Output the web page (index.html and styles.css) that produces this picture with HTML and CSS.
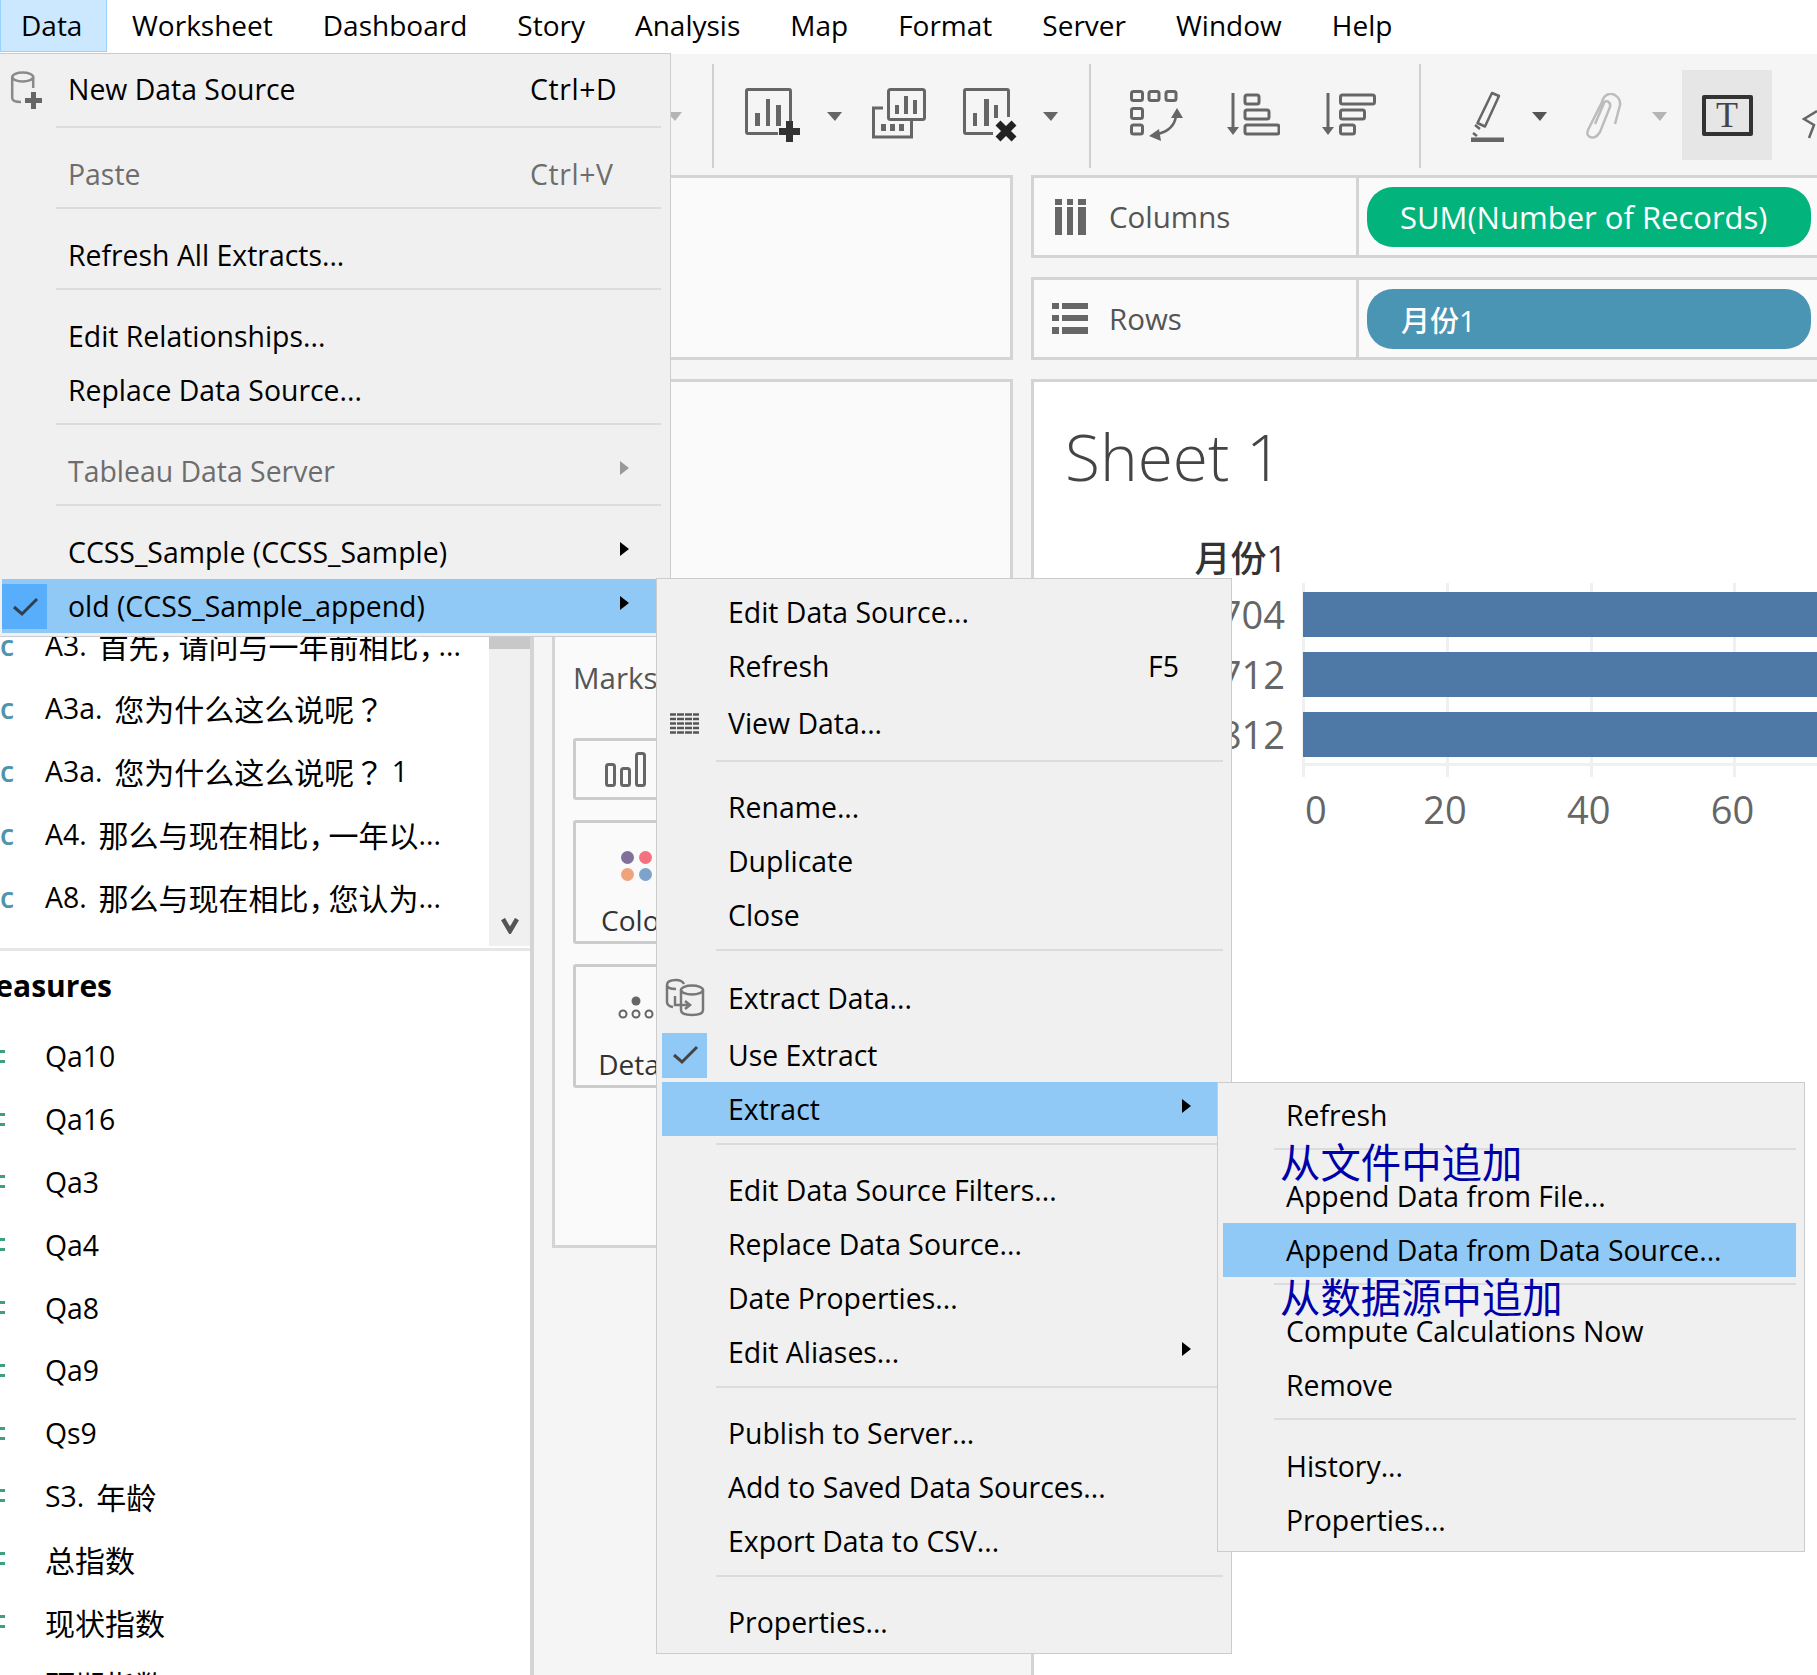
FILE: index.html
```html
<!DOCTYPE html>
<html lang="en">
<head>
    <meta charset="UTF-8">
    <title>Tableau - Data menu</title>
    <link rel="stylesheet" href="styles.css">
</head>
<body>
<div class="app">
    <!-- Menu bar -->
    <nav class="menubar">
        <span class="menubar-item active">Data</span>
        <span class="menubar-item">Worksheet</span>
        <span class="menubar-item">Dashboard</span>
        <span class="menubar-item">Story</span>
        <span class="menubar-item">Analysis</span>
        <span class="menubar-item">Map</span>
        <span class="menubar-item">Format</span>
        <span class="menubar-item">Server</span>
        <span class="menubar-item">Window</span>
        <span class="menubar-item">Help</span>
    </nav>

    <!-- Toolbar -->
    <div class="toolbar">
        <span class="drop faint t-first"></span>
        <span class="tool-sep t-sep1"></span>
        <svg class="t-add" width="56" height="54" viewBox="0 0 56 54" fill="none">
            <path d="M33 45.500H3Q1.500 45.500 1.500 44V3Q1.500 1.500 3 1.500H44Q45.500 1.500 45.500 3V33" stroke="#666" stroke-width="3"/>
            <path d="M10 25h5v13h-5zM21 11h4v27h-4zM31 17h5v21h-5z" fill="#666"/>
            <path d="M34 40h21v7h-21zM41 33h7v21h-7z" fill="#333"/>
        </svg>
        <span class="drop t-drop1"></span>
        <svg class="t-dup" width="54" height="52" viewBox="0 0 54 52" fill="none">
            <rect x="16.500" y="1.500" width="36" height="30" rx="2" stroke="#666" stroke-width="3"/>
            <path d="M23 17h4v9h-4zM32 8h4v18h-4zM41 12h4v14h-4z" fill="#666"/>
            <path d="M11 20H1.500V49H39.500V33" stroke="#666" stroke-width="3"/>
            <path d="M9 36h5v7h-5zM18 36h5v7h-5zM27 36h5v7h-5z" fill="#666"/>
        </svg>
        <svg class="t-clear" width="54" height="54" viewBox="0 0 54 54" fill="none">
            <path d="M30 45.500H3Q1.500 45.500 1.500 44V3Q1.500 1.500 3 1.500H44Q45.500 1.500 45.500 3V29" stroke="#666" stroke-width="3"/>
            <path d="M10 25h4v13h-4zM21 11h5v27h-5zM31 17h4v13h-4z" fill="#666"/>
            <path d="M35 35L51 51M51 35L35 51" stroke="#222" stroke-width="7"/>
        </svg>
        <span class="drop t-drop2"></span>
        <span class="tool-sep t-sep2"></span>
        <svg class="t-swap" width="53" height="52" viewBox="0 0 53 52" fill="none">
            <g stroke="#666" stroke-width="3">
                <rect x="1.500" y="1.500" width="11" height="9" rx="2"/>
                <rect x="19" y="1.500" width="10" height="9" rx="2"/>
                <rect x="36" y="1.500" width="10" height="9" rx="2"/>
                <rect x="1.500" y="18.500" width="11" height="10" rx="2"/>
                <rect x="1.500" y="35" width="11" height="9" rx="2"/>
                <path d="M46 26Q44 40 28 44" stroke-width="2.500"/>
            </g>
            <path d="M47 18L53 28H41zM19 46L29 39L31 51z" fill="#666"/>
        </svg>
        <svg class="t-asc" width="53" height="43" viewBox="0 0 53 43" fill="none">
            <path d="M6 0V35" stroke="#666" stroke-width="3"/>
            <path d="M0 34H12L6 42z" fill="#666"/>
            <g stroke="#666" stroke-width="3">
                <rect x="18" y="2" width="14" height="9" rx="2"/>
                <rect x="18" y="17" width="24" height="9" rx="2"/>
                <rect x="18" y="32" width="34" height="9" rx="2"/>
            </g>
        </svg>
        <svg class="t-desc" width="54" height="43" viewBox="0 0 54 43" fill="none">
            <path d="M6 0V35" stroke="#666" stroke-width="3"/>
            <path d="M0 34H12L6 42z" fill="#666"/>
            <g stroke="#666" stroke-width="3">
                <rect x="18.500" y="2" width="34" height="9" rx="2"/>
                <rect x="18.500" y="17" width="24" height="9" rx="2"/>
                <rect x="18.500" y="32" width="14" height="9" rx="2"/>
            </g>
        </svg>
        <span class="tool-sep t-sep3"></span>
        <svg class="t-pen" width="33" height="52" viewBox="0 0 33 52" fill="none">
            <path d="M21 3L28 6L14 36.500L6.500 33z" stroke="#666" stroke-width="2.500" stroke-linejoin="round"/>
            <path d="M4 35L9 39M2 43L6 46" stroke="#666" stroke-width="2.500"/>
            <path d="M0 47.500h33v4.500h-33z" fill="#666"/>
        </svg>
        <span class="drop dark t-drop3"></span>
        <svg class="t-clip" width="37" height="46" viewBox="0 0 37 46" fill="none">
            <path d="M30 31L35 12C36 4 28 0 24 1C20 2 18 5 17 9L3.500 36C1 41 3 44 7 44.500C11 45 13 42 15 39L25 14C26 9 21 6 19 10L10 31" stroke="#bcbcbc" stroke-width="2.500"/>
        </svg>
        <span class="drop faint t-drop4"></span>
        <span class="tool-text t-text"><span class="tool-text-box">T</span></span>
        <svg class="t-last" width="15" height="54" viewBox="0 0 15 54" fill="none">
            <path d="M15 23L2 31L12 37L7 50" stroke="#666" stroke-width="2.500"/>
        </svg>
    </div>

    <!-- Workspace -->
    <div class="workspace">
        <aside class="sidebar">
            <div class="dimensions">
                <ul class="field-list">
                    <li><span class="type-str">c</span>A3. <span class="zh lead">首先<span class="comma">，</span>请问与一年前相比<span class="comma">，</span></span>...</li>
                    <li><span class="type-str">c</span>A3a. <span class="zh lead">您为什么这么说呢<span class="mark">？</span></span></li>
                    <li><span class="type-str">c</span>A3a. <span class="zh lead">您为什么这么说呢<span class="mark">？</span></span> 1</li>
                    <li><span class="type-str">c</span>A4. <span class="zh lead">那么与现在相比<span class="comma">，</span>一年以</span>...</li>
                    <li><span class="type-str">c</span>A8. <span class="zh lead">那么与现在相比<span class="comma">，</span>您认为</span>...</li>
                </ul>
                <div class="scrollbar">
                    <div class="scroll-thumb"></div>
                    <svg width="18" height="16" viewBox="0 0 18 16" fill="none"><path d="M2 1L9 13L16 1" stroke="#555" stroke-width="4.500"/></svg>
                </div>
            </div>
            <h3 class="measures-head">Measures</h3>
            <ul class="field-list measures">
                <li><span class="type-num"></span>Qa10</li>
                <li><span class="type-num"></span>Qa16</li>
                <li><span class="type-num"></span>Qa3</li>
                <li><span class="type-num"></span>Qa4</li>
                <li><span class="type-num"></span>Qa8</li>
                <li><span class="type-num"></span>Qa9</li>
                <li><span class="type-num"></span>Qs9</li>
                <li><span class="type-num"></span>S3. <span class="zh lead">年龄</span></li>
                <li><span class="type-num"></span><span class="zh">总指数</span></li>
                <li><span class="type-num"></span><span class="zh">现状指数</span></li>
                <li><span class="type-num"></span><span class="zh">预期指数</span></li>
            </ul>
        </aside>

        <div class="cards">
            <section class="card card-pages"></section>
            <section class="card card-marks">
                <div class="marks-title">Marks</div>
                <div class="mark-type">
                    <svg width="41" height="35" viewBox="0 0 41 35" fill="none" stroke="#666" stroke-width="3">
                        <rect x="1.500" y="12.500" width="8" height="21" rx="2"/>
                        <rect x="16.500" y="16.500" width="8" height="17" rx="2"/>
                        <rect x="31.500" y="1.500" width="8" height="32" rx="2"/>
                    </svg>
                </div>
                <div class="mark-card">
                    <div class="dots">
                        <span class="dot purple"></span><span class="dot pink"></span>
                        <span class="dot orange"></span><span class="dot blue"></span>
                    </div>
                    <span class="mark-label">Color</span>
                </div>
                <div class="mark-card">
                    <svg class="detail-icon" width="36" height="24" viewBox="0 0 36 24" fill="none">
                        <circle cx="18" cy="5" r="4.500" fill="#666"/>
                        <circle cx="5" cy="18" r="3.500" stroke="#666" stroke-width="2"/>
                        <circle cx="18" cy="18" r="3.500" stroke="#666" stroke-width="2"/>
                        <circle cx="31" cy="18" r="3.500" stroke="#666" stroke-width="2"/>
                    </svg>
                    <span class="mark-label">Detail</span>
                </div>
            </section>
        </div>

        <main class="main">
            <div class="shelf">
                <div class="shelf-label">
                    <svg width="31" height="36" viewBox="0 0 31 36" fill="#666">
                        <path d="M0 0h7v6h-7zM12 0h6v6h-6zM23 0h8v6h-8zM0 8h7v28h-7zM12 8h6v28h-6zM23 8h8v28h-8z"/>
                    </svg>
                    <span>Columns</span>
                </div>
                <div class="pill pill-green">SUM(Number of Records)</div>
            </div>
            <div class="shelf">
                <div class="shelf-label">
                    <svg class="rows-icon" width="36" height="31" viewBox="0 0 36 31" fill="#666">
                        <path d="M0 0h7v6h-7zM10 0h26v6h-26zM0 12h7v6h-7zM10 12h26v6h-26zM0 24h7v7h-7zM10 24h26v7h-26z"/>
                    </svg>
                    <span>Rows</span>
                </div>
                <div class="pill pill-blue">月份1</div>
            </div>
            <section class="sheet">
                <h1 class="sheet-title">Sheet 1</h1>
                <div class="row-head">月份1</div>
                <div class="chart">
                    <div class="row-labels">
                        <span>704</span>
                        <span>712</span>
                        <span>812</span>
                    </div>
                    <div class="plot-area">
                        <div class="plot">
                            <div class="bar"></div>
                            <div class="bar"></div>
                            <div class="bar"></div>
                        </div>
                        <div class="ticks"></div>
                        <div class="axis">
                            <span class="axis-first">0</span>
                            <span>20</span>
                            <span>40</span>
                            <span>60</span>
                        </div>
                    </div>
                </div>
            </section>
        </main>
    </div>

    <!-- Data menu -->
    <div class="menu menu-data">
        <div class="menu-item first">
            <span class="slot">
                <svg class="new-source-icon" width="40" height="40" viewBox="0 0 40 40" fill="none">
                    <ellipse cx="19.700" cy="8" rx="10.500" ry="4.500" stroke="#8a8a8a" stroke-width="2.500"/>
                    <path d="M9.200 8V29Q9.200 33 18 33M30.200 8V19" stroke="#8a8a8a" stroke-width="2.500"/>
                    <path d="M22 29h17v5h-17zM28 23h5v17h-5z" fill="#666"/>
                </svg>
            </span>
            <span class="label">New Data Source</span><span class="shortcut">Ctrl+D</span>
        </div>
        <div class="menu-sep"></div>
        <div class="menu-item disabled"><span class="slot"></span><span class="label">Paste</span><span class="shortcut">Ctrl+V</span></div>
        <div class="menu-sep"></div>
        <div class="menu-item"><span class="slot"></span><span class="label">Refresh All Extracts...</span></div>
        <div class="menu-sep"></div>
        <div class="menu-item"><span class="slot"></span><span class="label">Edit Relationships...</span></div>
        <div class="menu-item"><span class="slot"></span><span class="label">Replace Data Source...</span></div>
        <div class="menu-sep"></div>
        <div class="menu-item disabled"><span class="slot"></span><span class="label">Tableau Data Server</span><span class="arrow"></span></div>
        <div class="menu-sep"></div>
        <div class="menu-item"><span class="slot"></span><span class="label">CCSS_Sample (CCSS_Sample)</span><span class="arrow"></span></div>
        <div class="menu-item hot">
            <span class="slot checked strong"><svg width="45" height="45" viewBox="0 0 45 45" fill="none"><path d="M12 23L20 30L35 15" stroke="#2f3f4f" stroke-width="3"/></svg></span>
            <span class="label">old (CCSS_Sample_append)</span><span class="arrow"></span>
        </div>
    </div>

    <!-- Data source submenu -->
    <div class="menu menu-source">
        <div class="menu-item"><span class="slot"></span><span class="label">Edit Data Source...</span></div>
        <div class="menu-item"><span class="slot"></span><span class="label">Refresh</span><span class="shortcut">F5</span></div>
        <div class="menu-item view-row">
            <span class="slot">
                <svg width="29" height="21" viewBox="0 0 29 21" fill="none">
                    <path d="M0 1.500H29M0 6H29M0 10.500H29M0 15H29M0 19.500H29" stroke="#555" stroke-width="2.500" stroke-dasharray="6 1 7 1 7 1 6"/>
                </svg>
            </span>
            <span class="label">View Data...</span>
        </div>
        <div class="menu-sep"></div>
        <div class="menu-item"><span class="slot"></span><span class="label">Rename...</span></div>
        <div class="menu-item"><span class="slot"></span><span class="label">Duplicate</span></div>
        <div class="menu-item"><span class="slot"></span><span class="label">Close</span></div>
        <div class="menu-sep"></div>
        <div class="menu-item extract-row">
            <span class="slot">
                <svg width="40" height="40" viewBox="0 0 40 40" fill="none" stroke="#777" stroke-width="2.500">
                    <ellipse cx="27" cy="12" rx="11" ry="4.500"/>
                    <path d="M16 12V32Q16 37 27 37Q38 37 38 32V12"/>
                    <path d="M19 6Q17 2 11 2Q2 2 2 7V24Q2 28 8 29M2 7Q2 11 11 11"/>
                    <path d="M10 18V27H24M20 23L25 27L20 31"/>
                </svg>
            </span>
            <span class="label">Extract Data...</span>
        </div>
        <div class="menu-item use-row">
            <span class="slot checked"><svg width="45" height="45" viewBox="0 0 45 45" fill="none"><path d="M12 22L20 29L35 14" stroke="#444" stroke-width="3"/></svg></span>
            <span class="label">Use Extract</span>
        </div>
        <div class="menu-item hot"><span class="slot"></span><span class="label">Extract</span><span class="arrow"></span></div>
        <div class="menu-sep"></div>
        <div class="menu-item"><span class="slot"></span><span class="label">Edit Data Source Filters...</span></div>
        <div class="menu-item"><span class="slot"></span><span class="label">Replace Data Source...</span></div>
        <div class="menu-item"><span class="slot"></span><span class="label">Date Properties...</span></div>
        <div class="menu-item"><span class="slot"></span><span class="label">Edit Aliases...</span><span class="arrow"></span></div>
        <div class="menu-sep"></div>
        <div class="menu-item"><span class="slot"></span><span class="label">Publish to Server...</span></div>
        <div class="menu-item"><span class="slot"></span><span class="label">Add to Saved Data Sources...</span></div>
        <div class="menu-item"><span class="slot"></span><span class="label">Export Data to CSV...</span></div>
        <div class="menu-sep"></div>
        <div class="menu-item"><span class="slot"></span><span class="label">Properties...</span></div>
    </div>

    <!-- Extract submenu -->
    <div class="menu menu-extract">
        <div class="menu-item"><span class="slot"></span><span class="label">Refresh</span></div>
        <div class="menu-sep"></div>
        <div class="menu-item"><span class="slot"></span><span class="label">Append Data from File...</span></div>
        <div class="menu-item hot"><span class="slot"></span><span class="label">Append Data from Data Source...</span></div>
        <div class="menu-sep"></div>
        <div class="menu-item"><span class="slot"></span><span class="label">Compute Calculations Now</span></div>
        <div class="menu-item"><span class="slot"></span><span class="label">Remove</span></div>
        <div class="menu-sep"></div>
        <div class="menu-item"><span class="slot"></span><span class="label">History...</span></div>
        <div class="menu-item"><span class="slot"></span><span class="label">Properties...</span></div>
        <span class="note note-file">从文件中追加</span>
        <span class="note note-source">从数据源中追加</span>
    </div>
</div>
</body>
</html>
```

FILE: styles.css
```css
/* Global */
* {
    box-sizing: border-box;
}
body {
    margin: 0;
    background-color: #fff;
    color: #000;
    font-family: "Open Sans", "Noto Sans CJK SC", sans-serif;
    font-size: 28.400px;
}
ul {
    list-style: none;
    margin: 0;
    padding: 0;
}
.app {
    position: relative;
    width: 1817px;
    height: 1675px;
    overflow: hidden;
}
.zh {
    font-size: 30px;
}
.zh.lead {
    margin-left: 4.500px;
}
.zh .comma {
    margin-right: -10px;
}
.zh .mark {
    font-family: "Noto Sans CJK TC", sans-serif;
}

/* Menu bar */
.menubar {
    display: flex;
    height: 54px;
    background-color: #fff;
    font-size: 28px;
}
.menubar-item {
    display: flex;
    align-items: center;
    height: 52px;
    padding: 0 25px 2px;
}
.menubar-item.active {
    width: 107px;
    padding-left: 20px;
    background-color: #cce8ff;
    border: 1px solid #99d1ff;
    border-top: 0;
}

/* Toolbar */
.toolbar {
    display: flex;
    align-items: flex-start;
    height: 121px;
    padding-left: 667px;
    background-color: #f5f5f5;
}
.toolbar svg {
    flex: none;
}
.tool-sep {
    flex: none;
    width: 2px;
    height: 104px;
    margin-top: 10px;
    background-color: #d0d0d0;
}
.drop {
    flex: none;
    width: 0;
    height: 0;
    margin-top: 58px;
    border-left: 8px solid transparent;
    border-right: 7px solid transparent;
    border-top: 9px solid #666;
}
.drop.dark {
    border-top-color: #555;
}
.drop.faint {
    border-top-color: #b5b5b5;
}
.t-sep1 { margin-left: 30px; }
.t-add { margin: 34px 0 0 31px; }
.t-drop1 { margin-left: 26px; }
.t-dup { margin: 34px 0 0 30px; }
.t-clear { margin: 34px 0 0 37px; }
.t-drop2 { margin-left: 26px; }
.t-sep2 { margin-left: 31px; }
.t-swap { margin: 36px 0 0 39px; }
.t-asc { margin: 39px 0 0 44px; }
.t-desc { margin: 39px 0 0 42px; }
.t-sep3 { margin-left: 43px; }
.t-pen { margin: 36px 0 0 50px; }
.t-drop3 { margin-left: 28px; }
.t-clip { margin: 39px 0 0 38px; }
.t-drop4 { margin-left: 30px; }
.t-text { margin: 16px 0 0 15px; }
.t-last { margin: 34px 0 0 30px; }
.tool-text {
    display: flex;
    flex: none;
    align-items: center;
    justify-content: center;
    width: 90px;
    height: 90px;
    background-color: #e6e6e6;
}
.tool-text-box {
    display: flex;
    align-items: center;
    justify-content: center;
    width: 51px;
    height: 41px;
    border: 4px solid #333;
    border-radius: 2px;
    color: #444;
    font-family: "Liberation Serif", serif;
    font-size: 36px;
}

/* Workspace */
.workspace {
    display: grid;
    grid-template-columns: 534px 461px 1fr;
    column-gap: 18px;
    height: 1500px;
    background-color: #f5f5f5;
}

/* Left data pane */
.sidebar {
    overflow: hidden;
    background-color: #fff;
    border-right: 4px solid #d4d4d4;
}
.dimensions {
    display: flex;
    height: 771px;
}
.field-list {
    flex: 1;
    padding-top: 438px;
}
.field-list li {
    display: flex;
    align-items: center;
    height: 63px;
    white-space: pre;
}
.type-str {
    width: 45px;
    color: #4f94ad;
    font-weight: 600;
}
.type-num {
    width: 5px;
    height: 13px;
    margin-right: 40px;
    border-top: 3px solid #3fa07c;
    border-bottom: 3px solid #3fa07c;
}
.scrollbar {
    display: flex;
    flex-direction: column;
    align-items: center;
    width: 41px;
    background-color: #f0f0f0;
}
.scroll-thumb {
    width: 100%;
    height: 474px;
    margin-bottom: 269px;
    background-color: #c8c8c8;
}
.measures-head {
    height: 77px;
    margin: 2px 0 0 -33px;
    padding-top: 14px;
    border-top: 3px solid #e6e6e6;
    font-size: 30px;
    font-weight: 700;
    white-space: nowrap;
}
.field-list.measures {
    padding-top: 0;
}
.measures li {
    height: 62.800px;
}

/* Marks and pages cards */
.cards {
    display: flex;
    flex-direction: column;
    gap: 19px;
}
.card {
    background-color: #fafafa;
    border: 3px solid #d4d4d4;
}
.card-pages {
    height: 185px;
}
.card-marks {
    height: 869px;
    padding: 275px 0 0 18px;
}
.marks-title {
    margin-bottom: 40px;
    color: #555;
    font-size: 29.500px;
}
.mark-type {
    display: flex;
    align-items: center;
    width: 220px;
    height: 62px;
    padding-left: 29px;
    margin-bottom: 20px;
    border: 3px solid #ccc;
    border-radius: 3px;
}
.mark-card {
    display: flex;
    flex-direction: column;
    align-items: center;
    width: 126px;
    height: 124px;
    margin-bottom: 20px;
    padding-top: 28px;
    border: 3px solid #ccc;
    border-radius: 3px;
}
.mark-label {
    color: #333;
    font-size: 28px;
}
.dots {
    display: grid;
    grid-template-columns: 13px 13px;
    gap: 4px 5px;
    margin-bottom: 20px;
}
.dot {
    width: 13px;
    height: 13px;
    border-radius: 50%;
}
.purple { background-color: #80709a; }
.pink { background-color: #f4727f; }
.orange { background-color: #f0a47c; }
.blue { background-color: #7ba3cc; }
.detail-icon {
    margin-top: 1px;
    margin-bottom: 25px;
}

/* Shelves */
.main {
    display: flex;
    flex-direction: column;
    gap: 19px;
}
.shelf {
    display: flex;
    align-items: center;
    height: 83px;
    background-color: #fafafa;
    border: 3px solid #d4d4d4;
    border-right: 0;
}
.shelf-label {
    display: flex;
    align-items: center;
    gap: 23px;
    width: 325px;
    height: 100%;
    padding-left: 21px;
    border-right: 3px solid #d4d4d4;
    color: #555;
    font-size: 29.500px;
}
.rows-icon {
    margin-left: -3px;
    margin-right: -2px;
}
.pill {
    display: flex;
    align-items: center;
    width: 444px;
    height: 60px;
    margin-left: 8px;
    border-radius: 26px;
    color: #fff;
    font-weight: 500;
}
.pill-green {
    padding-left: 33px;
    background-color: #02b37c;
    font-size: 31px;
}
.pill-blue {
    padding-left: 34px;
    background-color: #4a95b3;
    font-size: 29px;
}

/* Sheet */
.sheet {
    flex: 1;
    padding: 33px 0 0 0;
    overflow: hidden;
    background-color: #fff;
    border-top: 3px solid #d4d4d4;
    border-left: 3px solid #d4d4d4;
}
.sheet-title {
    margin: 0 0 0 31px;
    color: #444;
    font-size: 64px;
    font-weight: 300;
    line-height: 84px;
}
.row-head {
    width: 253px;
    height: 48px;
    margin-top: 36px;
    color: #333;
    font-size: 36px;
    font-weight: 500;
    line-height: 48px;
    text-align: right;
}
.chart {
    display: flex;
}
.row-labels {
    display: flex;
    flex-direction: column;
    width: 251px;
    padding-top: 1px;
    color: #666;
    font-size: 38px;
    text-align: right;
}
.row-labels span {
    height: 60px;
    line-height: 60px;
}
.plot-area {
    flex: 1;
    margin-left: 17px;
}
.plot, .ticks {
    background-image: repeating-linear-gradient(90deg, #f0f0f0 0, #f0f0f0 3px, transparent 3px, transparent 143.800px);
}
.plot {
    display: flex;
    flex-direction: column;
    gap: 15px;
    height: 183px;
    padding: 9px 0 6px 1px;
    border-bottom: 3px solid #f0f0f0;
}
.bar {
    height: 45px;
    background-color: #4e78a5;
}
.ticks {
    height: 11px;
}
.axis {
    display: flex;
    margin-top: 6px;
    color: #666;
    font-size: 38px;
}
.axis span {
    flex: none;
    width: 143.800px;
    text-align: center;
}
.axis .axis-first {
    width: 71px;
    padding-left: 3px;
    text-align: left;
}

/* Drop-down menus */
.menu {
    position: absolute;
    background-color: #f0f0f0;
    border: 1px solid #ccc;
}
.menu-data {
    top: 53px;
    left: 0;
    width: 671px;
    height: 584px;
    padding: 8px 9px 0 2px;
    border-left: 0;
}
.menu-source {
    top: 578px;
    left: 656px;
    width: 576px;
    height: 1076px;
    padding: 6px 8px 0 5px;
}
.menu-extract {
    top: 1082px;
    left: 1217px;
    width: 588px;
    height: 470px;
    padding: 5px 8px 0 5px;
}
.menu-item {
    display: flex;
    align-items: center;
    height: 54px;
    padding-right: 32px;
}
.menu-item.first {
    margin-bottom: 10px;
}
.menu-item.view-row {
    margin: 3px 0 10px;
}
.menu-item.extract-row {
    margin-top: 20px;
}
.menu-item.use-row {
    margin-top: 3px;
}
.menu-item.hot {
    background-color: #90c8f6;
}
.menu-item.disabled {
    color: #6d6d6d;
}
.slot {
    display: flex;
    align-items: center;
    justify-content: center;
    flex: none;
    width: 45px;
    height: 45px;
    margin-right: 21px;
}
.new-source-icon {
    margin-left: -4px;
}
.slot.checked {
    background-color: #90c8f6;
}
.slot.checked.strong {
    background-color: #58aefa;
}
.label {
    flex: 1;
    white-space: nowrap;
}
.shortcut {
    margin-right: 12px;
}
.menu-data .shortcut {
    width: 99px;
    margin-right: 0;
    letter-spacing: 0.600px;
}
.arrow {
    width: 0;
    height: 0;
    margin-bottom: 6px;
    border-left: 9px solid #000;
    border-top: 7px solid transparent;
    border-bottom: 7px solid transparent;
}
.disabled .arrow {
    border-left-color: #999;
}
.menu-sep {
    height: 2px;
    margin: 6px 0 19px 54px;
    background-color: #dcdcdc;
}
.menu-source .menu-sep {
    margin: 7px 0 18px 54px;
}
.menu-extract .menu-sep {
    margin-left: 51px;
}
.menu-extract .slot {
    margin-right: 18px;
}
.note {
    position: absolute;
    left: 62px;
    color: #0000aa;
    font-size: 40.400px;
    line-height: 50px;
    white-space: nowrap;
}
.note-file {
    top: 55px;
}
.note-source {
    top: 190px;
}
```
